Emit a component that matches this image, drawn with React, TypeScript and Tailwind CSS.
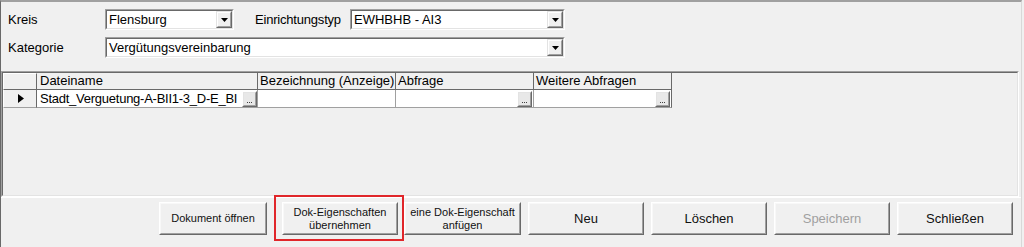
import React from "react";

function DropBtn() {
  return (
    <div className="w-[16px] h-full border border-t-[#e3e3e3] border-l-[#e3e3e3] border-b-[#696969] border-r-[#696969]">
      <div className="w-full h-full border border-t-white border-l-white border-b-[#a0a0a0] border-r-[#a0a0a0] bg-[#f0f0f0] flex items-center justify-center">
        <svg width="7" height="4" viewBox="0 0 7 4">
          <polygon points="0,0 7,0 3.5,4" fill="#000" />
        </svg>
      </div>
    </div>
  );
}

function Combo({ className, value }: { className: string; value: string }) {
  return (
    <div className={`h-[21px] border border-t-[#a0a0a0] border-l-[#a0a0a0] border-b-white border-r-white ${className}`}>
      <div className="h-full border border-t-[#696969] border-l-[#696969] border-b-[#e3e3e3] border-r-[#e3e3e3] bg-white flex items-stretch">
        <span className="flex-1 flex items-center pl-[2px] text-[13px] text-black leading-[16px] whitespace-nowrap overflow-hidden">
          {value}
        </span>
        <DropBtn />
      </div>
    </div>
  );
}

function Btn({
  className,
  children,
  disabled,
  small,
}: {
  className: string;
  children: React.ReactNode;
  disabled?: boolean;
  small?: boolean;
}) {
  return (
    <div className={`h-[33px] border border-t-white border-l-white border-b-[#696969] border-r-[#696969] ${className}`}>
      <div
        className={`w-full h-full border border-t-[#f8f8f8] border-l-[#f8f8f8] border-b-[#a0a0a0] border-r-[#a0a0a0] bg-[#f0f0f0] flex flex-col items-center justify-center text-center font-normal ${
          small ? "text-[11px] leading-[13px]" : "text-[13px] leading-none"
        } ${disabled ? "text-[#a0a0a0]" : "text-[#111]"}`}
      >
        {children}
      </div>
    </div>
  );
}

function Ellipsis() {
  return (
    <div className="w-[15px] h-[16px] border border-t-white border-l-white border-b-[#696969] border-r-[#696969] shrink-0">
      <div className="w-full h-full border border-t-[#e3e3e3] border-l-[#e3e3e3] border-b-[#a0a0a0] border-r-[#a0a0a0] bg-[#e8e8e8] flex items-end justify-center pb-[2px] gap-[1px]">
        <span className="w-[1px] h-[1px] bg-[#404040]" />
        <span className="w-[1px] h-[1px] bg-[#404040]" />
        <span className="w-[1px] h-[1px] bg-[#404040]" />
      </div>
    </div>
  );
}

export default function App() {
  return (
    <div className="w-[1024px] h-[247px] bg-[#f0f0f0] overflow-hidden font-['Liberation_Sans',Arial,sans-serif] text-black">
      <div className="w-[1022px] h-[249px] border-l border-l-[#696969] border-t-2 border-t-[#a0a0a0] border-r border-r-[#d8d8d8] flex flex-col">
        {/* top panel */}
        <div className="h-[69px] pl-[7px] pt-[7px] flex flex-col gap-[7px]">
          <div className="flex items-center h-[21px]">
            <span className="w-[97px] text-[13px] leading-none">Kreis</span>
            <Combo className="w-[129px]" value="Flensburg" />
            <span className="ml-[21px] w-[95px] text-[13px] leading-none tracking-[-0.2px]">Einrichtungstyp</span>
            <Combo className="w-[215px]" value="EWHBHB - AI3" />
          </div>
          <div className="flex items-center h-[21px]">
            <span className="w-[97px] text-[13px] leading-none">Kategorie</span>
            <Combo className="w-[460px]" value="Vergütungsvereinbarung" />
          </div>
        </div>

        {/* grid panel */}
        <div className="h-[126px] w-[1018px] border border-t-[#a0a0a0] border-l-[#a0a0a0] border-b-white border-r-white">
          <div className="w-full h-full border border-t-[#696969] border-l-[#696969] border-b-[#e3e3e3] border-r-[#e3e3e3] bg-[#f0f0f0]">
            {/* header */}
            <div className="flex h-[17px] text-[13px] leading-[16px]">
              <div className="w-[34px] h-full bg-[#f0f0f0] border-r border-b border-r-[#696969] border-b-[#696969] border-t border-t-white border-l border-l-white" />
              <div className="w-[221px] h-full bg-[#f0f0f0] border-r border-b border-r-[#696969] border-b-[#696969] flex items-center pl-[3px]">
                Dateiname
              </div>
              <div className="w-[138px] h-full bg-[#f0f0f0] border-r border-b border-r-[#696969] border-b-[#696969] flex items-center pl-[2px] whitespace-nowrap overflow-hidden">
                Bezeichnung (Anzeige)
              </div>
              <div className="w-[138px] h-full bg-[#f0f0f0] border-r border-b border-r-[#696969] border-b-[#696969] flex items-center pl-[2px]">
                Abfrage
              </div>
              <div className="w-[138px] h-full bg-[#f0f0f0] border-r border-b border-r-[#696969] border-b-[#696969] flex items-center pl-[2px]">
                Weitere Abfragen
              </div>
            </div>
            {/* data row */}
            <div className="flex h-[18px] text-[13px] leading-[16px]">
              <div className="w-[34px] h-full bg-[#f0f0f0] border-r border-b border-r-[#696969] border-b-[#a0a0a0] border-l border-l-white flex items-center pl-[14px]">
                <svg width="6" height="9" viewBox="0 0 6 9">
                  <polygon points="0,0 6,4.5 0,9" fill="#000" />
                </svg>
              </div>
              <div className="w-[221px] h-full bg-white border-r border-b border-r-[#a0a0a0] border-b-[#a0a0a0] flex items-center pl-[3px]">
                <span className="flex-1 whitespace-nowrap overflow-hidden tracking-[-0.25px] leading-[16px]">
                  Stadt_Verguetung-A-BII1-3_D-E_BI
                </span>
                <Ellipsis />
              </div>
              <div className="w-[138px] h-full bg-white border-r border-b border-r-[#a0a0a0] border-b-[#a0a0a0]" />
              <div className="w-[138px] h-full bg-white border-r border-b border-r-[#a0a0a0] border-b-[#a0a0a0] flex items-center justify-end pr-[1px]">
                <Ellipsis />
              </div>
              <div className="w-[138px] h-full bg-white border-r border-b border-r-[#696969] border-b-[#a0a0a0] flex items-center justify-end pr-[1px]">
                <Ellipsis />
              </div>
            </div>
          </div>
        </div>

        {/* button panel */}
        <div className="flex-1 border-t border-t-white pt-[4px] pl-[158px] flex items-start">
          <Btn className="w-[108px]" small>
            Dokument öffnen
          </Btn>
          <div className="relative ml-[15px]">
            <Btn className="w-[116px]" small>
              <span>Dok-Eigenschaften</span>
              <span>übernehmen</span>
            </Btn>
            <div className="absolute -left-[8px] -top-[7px] -right-[6px] -bottom-[6px] border-2 border-[#e0262a] pointer-events-none" />
          </div>
          <Btn className="w-[117px] ml-[6px]" small>
            <span>eine Dok-Eigenschaft</span>
            <span>anfügen</span>
          </Btn>
          <Btn className="w-[116px] ml-[7px]">Neu</Btn>
          <Btn className="w-[116px] ml-[7px]">Löschen</Btn>
          <Btn className="w-[116px] ml-[7px]" disabled>
            Speichern
          </Btn>
          <Btn className="w-[116px] ml-[7px]">Schließen</Btn>
        </div>
      </div>
    </div>
  );
}
